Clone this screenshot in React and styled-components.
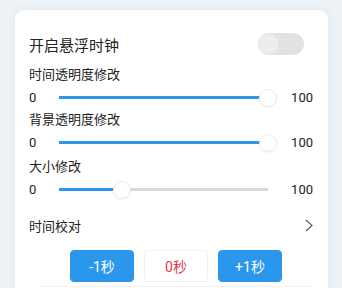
import React from 'react'
import styled, { createGlobalStyle } from 'styled-components'

const GlobalStyle = createGlobalStyle`
  html, body {
    margin: 0;
    padding: 0;
    background: #edf2f6;
    font-family: Roboto, "Noto Sans CJK SC", "Noto Sans", sans-serif;
    color: #222;
  }
`

const Page = styled.div`
  width: 342px;
  height: 288px;
  overflow: hidden;
  padding: 10px 14px 0 15px;
  box-sizing: border-box;
`

const Card = styled.section`
  background: #fff;
  border-radius: 9px;
  box-shadow: 0 0 8px rgba(120, 150, 180, 0.12);
  padding: 23px 15px 20px 14px;
  height: 320px;
  box-sizing: border-box;
`

const SwitchRow = styled.div`
  display: flex;
  align-items: center;
  justify-content: space-between;
  height: 22px;
  font-size: 15px;
`

const Switch = styled.div`
  width: 46px;
  height: 22px;
  border-radius: 11px;
  background: #e2e2e2;
  margin-right: 9px;
  position: relative;
  &::after {
    content: '';
    position: absolute;
    left: 1px;
    top: 1px;
    width: 20px;
    height: 20px;
    border-radius: 50%;
    background: #ededed;
  }
`

const Label = styled.div`
  font-size: 13px;
  line-height: 22px;
  height: 22px;
  margin-top: ${p => p.$top || 0}px;
`

const SliderRow = styled.div`
  display: flex;
  align-items: center;
  height: 23px;
  font-size: 13px;
`

const MinValue = styled.span`
  width: 30px;
`

const MaxValue = styled.span`
  width: 45px;
  text-align: right;
`

const Track = styled.div`
  flex: 1;
  height: 3px;
  background: #d8d8d8;
  position: relative;
`

const Fill = styled.div`
  height: 100%;
  background: #2b97ec;
`

const Thumb = styled.div`
  position: absolute;
  top: 50%;
  width: 18px;
  height: 18px;
  margin: -9px 0 0 -9px;
  border-radius: 50%;
  background: #fff;
  border: 1px solid #ececec;
  box-sizing: border-box;
  box-shadow: 0 1px 2px rgba(0, 0, 0, 0.05);
`

const LinkRow = styled.div`
  display: flex;
  align-items: center;
  justify-content: space-between;
  height: 48px;
  font-size: 13px;
`

const Buttons = styled.div`
  display: flex;
  justify-content: center;
  gap: 10px;
  margin: 1px 0 0 10px;
  padding-bottom: 4px;
  border-bottom: 1px solid #f0f0f0;
`

const Button = styled.button`
  width: 64px;
  height: 32px;
  border-radius: 4px;
  font-family: inherit;
  font-size: 14px;
  border: 1px solid ${p => (p.$plain ? '#f2f2f2' : '#2b97ec')};
  background: ${p => (p.$plain ? '#fff' : '#2b97ec')};
  color: ${p => (p.$plain ? '#e2364b' : '#fff')};
  padding: 0;
`

const Slider = ({ value }) => (
  <SliderRow>
    <MinValue>0</MinValue>
    <Track>
      <Fill style={{ width: `${value}%` }} />
      <Thumb style={{ left: `${value}%` }} />
    </Track>
    <MaxValue>100</MaxValue>
  </SliderRow>
)

const Chevron = () => (
  <svg width="8" height="13" viewBox="0 0 8 13" fill="none">
    <path d="M1 1l6 5.5L1 12" stroke="#555" strokeWidth="1.1" />
  </svg>
)

export default function App() {
  return (
    <Page>
      <GlobalStyle />
      <Card>
        <SwitchRow>
          <span>开启悬浮时钟</span>
          <Switch />
        </SwitchRow>
        <Label $top={9}>时间透明度修改</Label>
        <Slider value={100} />
        <Label>背景透明度修改</Label>
        <Slider value={100} />
        <Label $top={2}>大小修改</Label>
        <Slider value={30} />
        <LinkRow>
          <span>时间校对</span>
          <Chevron />
        </LinkRow>
        <Buttons>
          <Button>-1秒</Button>
          <Button $plain>0秒</Button>
          <Button>+1秒</Button>
        </Buttons>
      </Card>
    </Page>
  )
}
